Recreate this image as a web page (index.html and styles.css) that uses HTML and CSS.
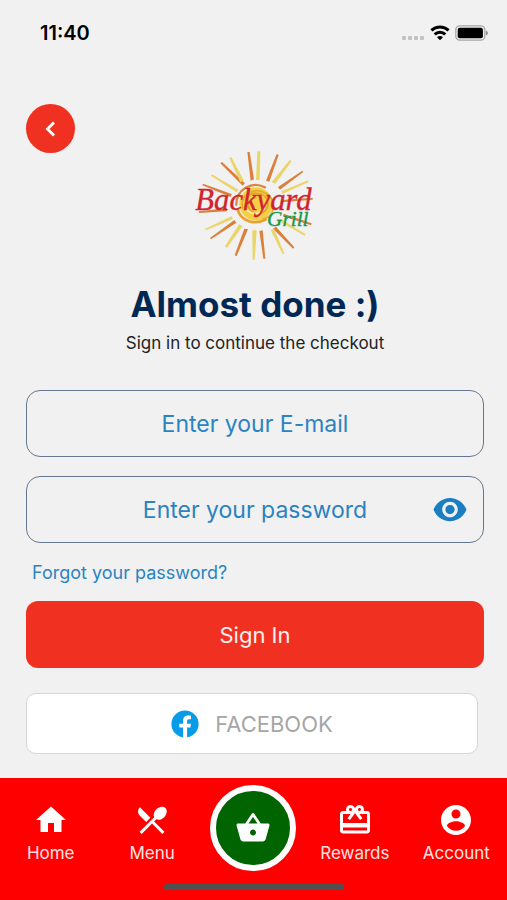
FILE: index.html
```html
<!DOCTYPE html>
<html lang="en">
<head>
<meta charset="utf-8">
<meta name="viewport" content="width=device-width, initial-scale=1">
<title>Backyard Grill – Sign in</title>
<link rel="stylesheet" href="styles.css">
</head>
<body>
<div class="app">
  <header class="status">
    <time class="status-time">11:40</time>
    <div class="status-icons">
      <svg width="24" height="20" viewBox="0 0 24 20" fill="#c2c2c2" aria-hidden="true"><rect x="1" y="13" width="4" height="4" rx="1"/><rect x="7" y="13" width="4" height="4" rx="1"/><rect x="13" y="13" width="4" height="4" rx="1"/><rect x="19" y="13" width="4" height="4" rx="1"/></svg>
      <svg width="20" height="20" viewBox="0 0 20 20" fill="none" stroke="#000" stroke-width="3" aria-hidden="true"><path d="M1.400 7.400a12.400 12.400 0 0 1 17.200 0"/><path d="M4.700 11.400a7.700 7.700 0 0 1 10.600 0"/><path d="M10 17.200 7 14.300a4.200 4.200 0 0 1 6 0z" fill="#000" stroke="none"/></svg>
      <svg width="34" height="20" viewBox="0 0 34 20" aria-hidden="true"><rect x=".8" y="2.800" width="29" height="14.400" rx="4" fill="none" stroke="#a6a6a6" stroke-width="1.300"/><rect x="2.700" y="4.700" width="25.200" height="10.600" rx="2" fill="#000"/><path d="M31.200 7.700c2 .7 2 3.900 0 4.600z" fill="#777"/></svg>
    </div>
  </header>

  <main class="content">
    <button class="back" type="button" aria-label="Back">
      <svg width="30" height="30" viewBox="0 0 24 24" fill="none" stroke="#fff" stroke-width="2.300" aria-hidden="true"><path d="M14.400 6.800 9.200 12l5.200 5.200"/></svg>
    </button>

    <svg class="logo" width="140" height="130" viewBox="0 0 420 390" role="img" aria-label="Backyard Grill">
      <g fill="#d9813a">
        <path d="M187 36l7 0 13 82-10 4z"/><path d="M275 42l6 3-28 80-10-3z"/><path d="M352 92l3 4-70 53-6-8z"/>
        <path d="M106 70l5-4 69 64-7 7z"/><path d="M52 136l2-5 86 31-3 9z"/><path d="M42 219l-1-5 84-9v9z"/>
        <path d="M78 298l-3-4 73-54 6 8z"/><path d="M155 348l-6-2 29-80 11 2z"/><path d="M241 356l-6 0-12-83 10-2z"/>
        <path d="M328 322l-4 4-60-60 9-6z"/><path d="M380 250l-2 6-84-27 2-8z"/><path d="M383 173v6l-94 8v-7z"/>
      </g>
      <g fill="#ead568">
        <path d="M217 34h9l-2 86h-11z"/><path d="M314 60l6 4-49 67-11-5z"/><path d="M369 121l2 5-79 36-3-8z"/>
        <path d="M133 54l6-3 37 70-10 6z"/><path d="M78 107l3-4 79 46-5 8z"/><path d="M63 271l-3-5 80-37 4 8z"/>
        <path d="M126 323l-6-4 42-66 11 5z"/><path d="M209 359h-6l-1-88h13z"/><path d="M298 340l-5 3-36-73 10-4z"/>
        <path d="M362 283l-3 4-74-42 4-7z"/>
      </g>
      <circle cx="213" cy="192" r="50" fill="#f5cf45"/>
      <g fill="none" stroke-linecap="round">
        <path d="M240 142c-40-20-86 6-86 52" stroke="#d88a38" stroke-width="7"/>
        <path d="M158 210c12 34 50 46 84 29" stroke="#e8a12d" stroke-width="8"/>
        <path d="M173 204c-9-39 34-65 69-44 36 22 28 68-8 78" stroke="#e3aa36" stroke-width="5"/>
        <path d="M181 180c13-30 60-26 67 5 5 28-25 47-47 31-19-15-11-40 11-43" stroke="#e2a12c" stroke-width="5"/>
        <path d="M187 211c22 20 51 6 53-17" stroke="#fff0a2" stroke-width="5"/>
      </g>
      <text class="logo-name" x="31" y="211">Backyard</text>
      <text class="logo-sub" x="246" y="258">Grill</text>
    </svg>

    <h1 class="title">Almost done :)</h1>
    <p class="subtitle">Sign in to continue the checkout</p>

    <form class="form">
      <input class="field" type="email" placeholder="Enter your E-mail" aria-label="E-mail">
      <div class="password">
        <input class="field" type="password" placeholder="Enter your password" aria-label="Password">
        <button class="reveal" type="button" aria-label="Show password">
          <svg width="36" height="36" viewBox="0 0 24 24" fill="#1b7dc2" aria-hidden="true"><path d="M12 4C7 4 2.730 7.300 1 11.700c1.730 4.500 6 7.800 11 7.800s9.270-3.300 11-7.800C21.270 7.300 17 4 12 4zM12 16.900c-2.860 0-5.200-2.340-5.200-5.200s2.340-5.200 5.200-5.200 5.200 2.340 5.200 5.200-2.340 5.200-5.200 5.200zm0-8.300c-1.710 0-3.100 1.390-3.100 3.100s1.390 3.100 3.100 3.100 3.100-1.390 3.100-3.100-1.390-3.100-3.100-3.100z"/></svg>
        </button>
      </div>
      <a class="forgot" href="#">Forgot your password?</a>
      <button class="signin" type="submit">Sign In</button>
      <button class="facebook" type="button">
        <svg width="28" height="28" viewBox="0 0 28 28" aria-hidden="true"><circle cx="14" cy="14" r="13.600" fill="#079be8"/><path d="M12.100 28V17.600H8.300v-3.900h3.800v-2.500c0-3.900 2-5.600 5.400-5.600 1.200 0 2 .1 2.500.2v3.500h-2c-1.500 0-1.900.7-1.900 2.100v2.300h3.800l-.5 3.900h-3.300V28z" fill="#fff"/></svg>
        <span>FACEBOOK</span>
      </button>
    </form>
  </main>

  <nav class="tabs" aria-label="Main">
    <a class="tab" href="#"><svg width="36" height="36" viewBox="0 0 24 24" aria-hidden="true"><path d="M10 20v-6h4v6h5v-8h3L12 3 2 12h3v8z"/></svg><span>Home</span></a>
    <a class="tab" href="#"><svg width="36" height="36" viewBox="0 0 24 24" aria-hidden="true"><path d="M8.100 13.340l2.830-2.830L3.910 3.500c-1.560 1.560-1.560 4.090 0 5.660l4.190 4.180zm6.780-1.810c1.530.71 3.680.21 5.270-1.380 1.910-1.910 2.280-4.650.81-6.120-1.460-1.460-4.200-1.100-6.120.81-1.590 1.590-2.090 3.740-1.380 5.270L3.700 19.870l1.410 1.410L12 14.410l6.880 6.880 1.410-1.410L13.410 13l1.470-1.470z"/></svg><span>Menu</span></a>
    <a class="cart" href="#" aria-label="Cart"><svg width="36" height="36" viewBox="0 0 24 24" aria-hidden="true"><path d="M17.210 9l-4.380-6.560c-.19-.28-.51-.42-.83-.42-.32 0-.64.14-.83.43L6.790 9H2c-.55 0-1 .45-1 1 0 .09.010.18.040.27l2.540 9.270c.23.840 1 1.460 1.920 1.460h13c.92 0 1.690-.62 1.930-1.460l2.540-9.270L23 10c0-.55-.45-1-1-1h-4.790zM9 9l3-4.400L15 9H9zm3 8c-1.100 0-2-.9-2-2s.9-2 2-2 2 .9 2 2-.9 2-2 2z"/></svg></a>
    <a class="tab" href="#"><svg width="36" height="36" viewBox="0 0 24 24" aria-hidden="true"><path d="M20 6h-2.180c.11-.31.18-.65.18-1 0-1.660-1.340-3-3-3-1.050 0-1.960.54-2.500 1.350l-.5.670-.5-.68C10.960 2.540 10.050 2 9 2 7.340 2 6 3.340 6 5c0 .35.070.69.180 1H4c-1.110 0-1.990.89-1.990 2L2 19c0 1.110.89 2 2 2h16c1.110 0 2-.89 2-2V8c0-1.110-.89-2-2-2zm-5-2c.55 0 1 .45 1 1s-.45 1-1 1-1-.45-1-1 .45-1 1-1zM9 4c.55 0 1 .45 1 1s-.45 1-1 1-1-.45-1-1 .45-1 1-1zm11 15H4v-2h16v2zm0-5H4V8h5.080L7 10.830 8.620 12 11 8.760l1-1.360 1 1.360L15.380 12 17 10.830 14.920 8H20v6z"/></svg><span>Rewards</span></a>
    <a class="tab" href="#"><svg width="36" height="36" viewBox="0 0 24 24" aria-hidden="true"><path d="M12 2C6.480 2 2 6.480 2 12s4.480 10 10 10 10-4.480 10-10S17.520 2 12 2zm0 3c1.660 0 3 1.340 3 3s-1.340 3-3 3-3-1.340-3-3 1.340-3 3-3zm0 14.200c-2.500 0-4.710-1.280-6-3.220.03-1.990 4-3.080 6-3.080 1.990 0 5.970 1.090 6 3.080-1.290 1.940-3.500 3.220-6 3.220z"/></svg><span>Account</span></a>
    <div class="home-indicator"></div>
  </nav>
</div>
</body>
</html>
```
FILE: styles.css
```css
* { box-sizing: border-box; }

body {
  margin: 0;
  background: #f1f1f1;
  color: #222;
  font-family: Inter, "Liberation Sans", sans-serif;
}

button, input { font: inherit; }

button { padding: 0; border: 0; cursor: pointer; }

a { text-decoration: none; }

.app {
  display: flex;
  flex-direction: column;
  min-height: 100vh;
}

.status {
  display: flex;
  align-items: center;
  justify-content: space-between;
  height: 66px;
  padding: 0 18px 0 40px;
}

.status-time {
  color: #000;
  font-size: 20px;
  font-weight: 600;
}

.status-icons {
  display: flex;
  gap: 5px;
}

.content {
  display: flex;
  flex: 1;
  flex-direction: column;
  padding: 38px 23px 24px 26px;
}

.back {
  display: grid;
  place-items: center;
  width: 49px;
  height: 49px;
  border-radius: 50%;
  background: #f03020;
}

.logo {
  align-self: center;
  margin-top: -13px;
}

.logo-name, .logo-sub {
  font-family: "Liberation Serif", serif;
  font-style: italic;
}

.logo-name {
  fill: #d1232f;
  stroke: #d1232f;
  stroke-width: 1;
  font-size: 92px;
}

.logo-sub {
  fill: #17994b;
  stroke: #17994b;
  stroke-width: 1;
  font-size: 64px;
}

.title {
  margin: 13px 0 0;
  color: #002855;
  font-size: 35px;
  font-weight: 700;
  line-height: 42px;
  text-align: center;
}

.subtitle {
  margin: 6px 0 0;
  font-size: 17px;
  line-height: 24px;
  text-align: center;
}

.form {
  display: flex;
  flex-direction: column;
  margin-top: 35px;
}

.field {
  display: block;
  width: 100%;
  height: 67px;
  padding: 0 48px;
  border: 1px solid #64788f;
  border-radius: 14px;
  background: transparent;
  color: #2b83c1;
  font-size: 23px;
  text-align: center;
}

.field::placeholder { color: #2b83c1; opacity: 1; }

.password {
  position: relative;
  margin-top: 19px;
}

.reveal {
  display: grid;
  position: absolute;
  top: 0;
  right: 16px;
  bottom: 0;
  place-items: center;
  background: none;
}

.forgot {
  align-self: flex-start;
  margin: 18px 0 0 6px;
  color: #2b83c1;
  font-size: 18px;
  line-height: 24px;
}

.signin {
  height: 67px;
  margin-top: 16px;
  border-radius: 12px;
  background: #f03020;
  color: #fff0ee;
  font-size: 22px;
}

.facebook {
  display: flex;
  align-items: center;
  justify-content: center;
  gap: 16px;
  height: 61px;
  margin: 25px 6px 0 0;
  border: 1px solid #d6d6d6;
  border-radius: 10px;
  background: #fff;
  color: #a6a6a6;
  font-size: 22px;
}

.tabs {
  display: grid;
  grid-template-columns: repeat(5, 1fr);
  justify-items: center;
  padding: 7px 0 10px;
  background: #f00;
}

.tab {
  display: flex;
  flex-direction: column;
  align-items: center;
  gap: 3px;
  padding-top: 17px;
  color: #ffe3e3;
  font-size: 17px;
  line-height: 24px;
}

.tab svg, .cart svg { fill: #fff; }

.cart {
  display: grid;
  place-items: center;
  width: 86px;
  height: 86px;
  border: 6px solid #fff;
  border-radius: 50%;
  background: #006400;
}

.home-indicator {
  grid-column: 1 / -1;
  width: 180px;
  height: 6px;
  margin-top: 13px;
  border-radius: 3px;
  background: #505050;
}
```
